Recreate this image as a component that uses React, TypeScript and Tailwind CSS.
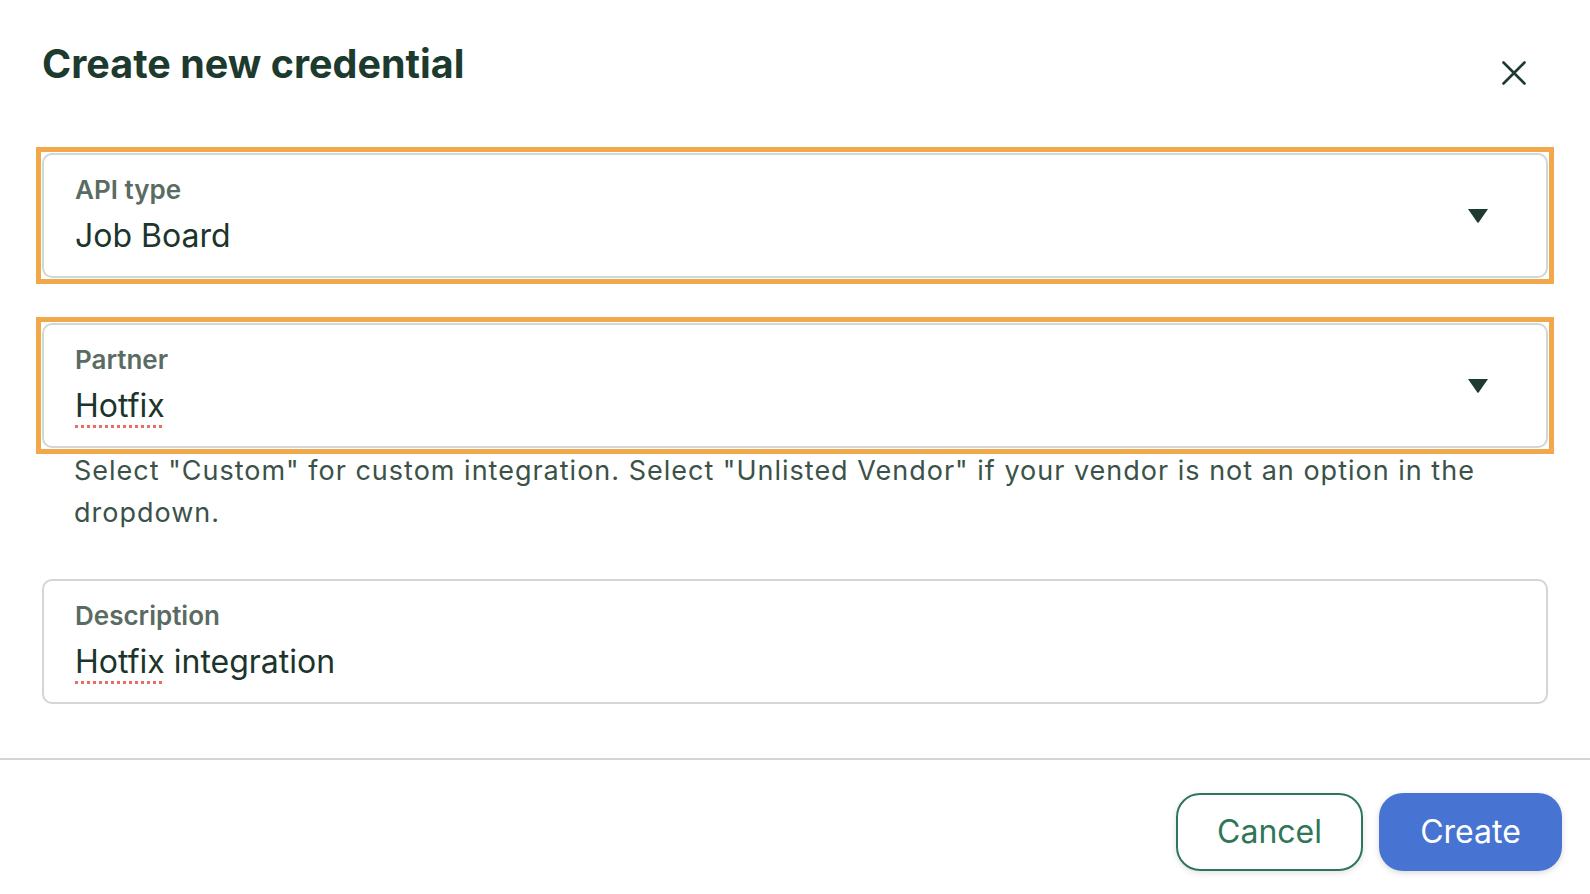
import React from 'react';

const Chevron: React.FC = () => (
  <svg width="20" height="14" viewBox="0 0 20 14" className="shrink-0">
    <path d="M0 0 H20 L10.8 13.2 a1 1 0 0 1 -1.6 0 Z" fill="#1f3a30" />
  </svg>
);

interface FieldProps {
  label: string;
  children: React.ReactNode;
  select?: boolean;
}

const Field: React.FC<FieldProps> = ({ label, children, select }) => (
  <div className="flex items-center h-[125px] pl-[31px] pr-[58px] rounded-[10px] border-2 border-[#d1d7d4] bg-white">
    <div className="flex-1 self-start pt-[20px] flex flex-col">
      <span className="text-[26px] leading-[30px] font-semibold text-[#5a6b63]">{label}</span>
      <span className="text-[32px] leading-[40px] mt-[11px] text-[#1c352c]">{children}</span>
    </div>
    {select && <Chevron />}
  </div>
);

// focus ring drawn around a field (square corners, as in the picture)
const Highlight: React.FC<{ children: React.ReactNode }> = ({ children }) => (
  <div className="-m-[6px] p-[1px] border-[5px] border-[#f0a84a]">{children}</div>
);

const Misspelled: React.FC<{ children: React.ReactNode }> = ({ children }) => (
  <span className="underline decoration-dotted decoration-[#ee6b5f] decoration-[3px] underline-offset-[8px]">
    {children}
  </span>
);

export default function App() {
  return (
    <div className="w-[1590px] h-[894px] bg-white font-['Inter',sans-serif] overflow-hidden flex flex-col">
      <div className="flex items-start justify-between pl-[42px] pr-[64px] pt-[39px]">
        <h1 className="text-[39.5px] leading-[50px] font-bold text-[#1d3a2f]">Create new credential</h1>
        <button className="mt-[22px] w-[24px] h-[24px] flex items-center justify-center">
          <svg width="24" height="24" viewBox="0 0 24 24">
            <path d="M1.5 1.5 L22.5 22.5 M22.5 1.5 L1.5 22.5" stroke="#1f3a30" strokeWidth="2.6" strokeLinecap="round" />
          </svg>
        </button>
      </div>

      <div className="flex flex-col px-[42px] mt-[64px]">
        <Highlight>
          <Field label="API type" select>
            Job Board
          </Field>
        </Highlight>
        <div className="mt-[45px]">
          <Highlight>
            <Field label="Partner" select>
              <Misspelled>Hotfix</Misspelled>
            </Field>
          </Highlight>
        </div>
        <p className="pl-[32px] pr-[40px] mt-[2px] text-[27px] leading-[42px] tracking-[1px] text-[#3b5248]">
          Select "Custom" for custom integration. Select "Unlisted Vendor" if your vendor is not an option in the
          dropdown.
        </p>
        <div className="mt-[45px]">
          <Field label="Description">
            <Misspelled>Hotfix</Misspelled> integration
          </Field>
        </div>
      </div>

      <div className="mt-[54px] h-[2px] bg-[#d1d6d4]" />

      <div className="flex justify-end gap-[16px] pr-[28px] mt-[33px]">
        <button className="w-[187px] h-[78px] rounded-[24px] border-2 border-[#2f7659] bg-white text-[32px] text-[#2f7659] shadow-[0_2px_6px_rgba(0,0,0,0.12)]">
          Cancel
        </button>
        <button className="w-[183px] h-[78px] rounded-[24px] bg-[#4774d2] text-[32px] text-white shadow-[0_2px_6px_rgba(0,0,0,0.15)]">
          Create
        </button>
      </div>
    </div>
  );
}
